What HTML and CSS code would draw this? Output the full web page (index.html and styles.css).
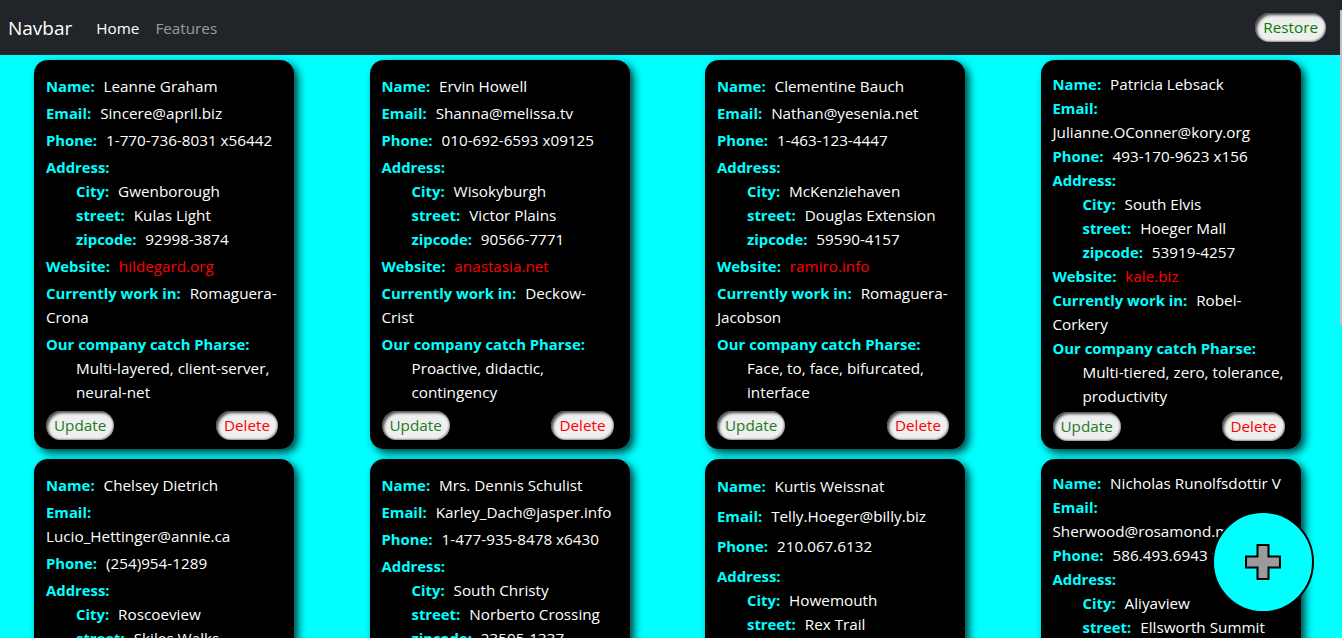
FILE: index.html
```html
<!DOCTYPE html>
<html lang="en">
<head>
<meta charset="utf-8">
<title>Users</title>
<link rel="stylesheet" href="styles.css">
</head>
<body>
<nav class="navbar">
  <a class="brand" href="#">Navbar</a>
  <ul class="nav-links">
    <li><a class="nav-link active" href="#">Home</a></li>
    <li><a class="nav-link" href="#">Features</a></li>
  </ul>
  <button class="btn btn-restore">Restore</button>
</nav>

<main class="grid">
  <article class="card">
    <div class="item"><span class="lbl">Name:</span> <span class="val">Leanne Graham</span></div>
    <div class="item"><span class="lbl">Email:</span> <span class="val">Sincere@april.biz</span></div>
    <div class="item"><span class="lbl">Phone:</span> <span class="val">1-770-736-8031 x56442</span></div>
    <div class="item"><div class="lbl">Address:</div>
      <div class="sub">
        <div><span class="lbl">City:</span> <span class="val">Gwenborough</span></div>
        <div><span class="lbl">street:</span> <span class="val">Kulas Light</span></div>
        <div><span class="lbl">zipcode:</span> <span class="val">92998-3874</span></div>
      </div>
    </div>
    <div class="item"><span class="lbl">Website:</span> <a class="link" href="#">hildegard.org</a></div>
    <div class="item"><span class="lbl">Currently work in:</span> <span class="val">Romaguera-Crona</span></div>
    <div class="item"><div class="lbl">Our company catch Pharse:</div><div class="sub val">Multi-layered, client-server, neural-net</div></div>
    <div class="actions"><button class="btn btn-update">Update</button><button class="btn btn-delete">Delete</button></div>
  </article>

  <article class="card">
    <div class="item"><span class="lbl">Name:</span> <span class="val">Ervin Howell</span></div>
    <div class="item"><span class="lbl">Email:</span> <span class="val">Shanna@melissa.tv</span></div>
    <div class="item"><span class="lbl">Phone:</span> <span class="val">010-692-6593 x09125</span></div>
    <div class="item"><div class="lbl">Address:</div>
      <div class="sub">
        <div><span class="lbl">City:</span> <span class="val">Wisokyburgh</span></div>
        <div><span class="lbl">street:</span> <span class="val">Victor Plains</span></div>
        <div><span class="lbl">zipcode:</span> <span class="val">90566-7771</span></div>
      </div>
    </div>
    <div class="item"><span class="lbl">Website:</span> <a class="link" href="#">anastasia.net</a></div>
    <div class="item"><span class="lbl">Currently work in:</span> <span class="val">Deckow-Crist</span></div>
    <div class="item"><div class="lbl">Our company catch Pharse:</div><div class="sub val">Proactive, didactic, contingency</div></div>
    <div class="actions"><button class="btn btn-update">Update</button><button class="btn btn-delete">Delete</button></div>
  </article>

  <article class="card">
    <div class="item"><span class="lbl">Name:</span> <span class="val">Clementine Bauch</span></div>
    <div class="item"><span class="lbl">Email:</span> <span class="val">Nathan@yesenia.net</span></div>
    <div class="item"><span class="lbl">Phone:</span> <span class="val">1-463-123-4447</span></div>
    <div class="item"><div class="lbl">Address:</div>
      <div class="sub">
        <div><span class="lbl">City:</span> <span class="val">McKenziehaven</span></div>
        <div><span class="lbl">street:</span> <span class="val">Douglas Extension</span></div>
        <div><span class="lbl">zipcode:</span> <span class="val">59590-4157</span></div>
      </div>
    </div>
    <div class="item"><span class="lbl">Website:</span> <a class="link" href="#">ramiro.info</a></div>
    <div class="item"><span class="lbl">Currently work in:</span> <span class="val">Romaguera-Jacobson</span></div>
    <div class="item"><div class="lbl">Our company catch Pharse:</div><div class="sub val">Face, to, face, bifurcated, interface</div></div>
    <div class="actions"><button class="btn btn-update">Update</button><button class="btn btn-delete">Delete</button></div>
  </article>

  <article class="card">
    <div class="item"><span class="lbl">Name:</span> <span class="val">Patricia Lebsack</span></div>
    <div class="item"><span class="lbl">Email:</span> <span class="val">Julianne.OConner@kory.org</span></div>
    <div class="item"><span class="lbl">Phone:</span> <span class="val">493-170-9623 x156</span></div>
    <div class="item"><div class="lbl">Address:</div>
      <div class="sub">
        <div><span class="lbl">City:</span> <span class="val">South Elvis</span></div>
        <div><span class="lbl">street:</span> <span class="val">Hoeger Mall</span></div>
        <div><span class="lbl">zipcode:</span> <span class="val">53919-4257</span></div>
      </div>
    </div>
    <div class="item"><span class="lbl">Website:</span> <a class="link" href="#">kale.biz</a></div>
    <div class="item"><span class="lbl">Currently work in:</span> <span class="val">Robel-Corkery</span></div>
    <div class="item"><div class="lbl">Our company catch Pharse:</div><div class="sub val">Multi-tiered, zero, tolerance, productivity</div></div>
    <div class="actions"><button class="btn btn-update">Update</button><button class="btn btn-delete">Delete</button></div>
  </article>

  <article class="card">
    <div class="item"><span class="lbl">Name:</span> <span class="val">Chelsey Dietrich</span></div>
    <div class="item"><span class="lbl">Email:</span> <span class="val">Lucio_Hettinger@annie.ca</span></div>
    <div class="item"><span class="lbl">Phone:</span> <span class="val">(254)954-1289</span></div>
    <div class="item"><div class="lbl">Address:</div>
      <div class="sub">
        <div><span class="lbl">City:</span> <span class="val">Roscoeview</span></div>
        <div><span class="lbl">street:</span> <span class="val">Skiles Walks</span></div>
        <div><span class="lbl">zipcode:</span> <span class="val">33263</span></div>
      </div>
    </div>
    <div class="item"><span class="lbl">Website:</span> <a class="link" href="#">demarco.info</a></div>
    <div class="item"><span class="lbl">Currently work in:</span> <span class="val">Keebler LLC</span></div>
    <div class="item"><div class="lbl">Our company catch Pharse:</div><div class="sub val">User-centric, fault-tolerant, solution</div></div>
    <div class="actions"><button class="btn btn-update">Update</button><button class="btn btn-delete">Delete</button></div>
  </article>

  <article class="card">
    <div class="item"><span class="lbl">Name:</span> <span class="val">Mrs. Dennis Schulist</span></div>
    <div class="item"><span class="lbl">Email:</span> <span class="val">Karley_Dach@jasper.info</span></div>
    <div class="item"><span class="lbl">Phone:</span> <span class="val">1-477-935-8478 x6430</span></div>
    <div class="item"><div class="lbl">Address:</div>
      <div class="sub">
        <div><span class="lbl">City:</span> <span class="val">South Christy</span></div>
        <div><span class="lbl">street:</span> <span class="val">Norberto Crossing</span></div>
        <div><span class="lbl">zipcode:</span> <span class="val">23505-1337</span></div>
      </div>
    </div>
    <div class="item"><span class="lbl">Website:</span> <a class="link" href="#">ola.org</a></div>
    <div class="item"><span class="lbl">Currently work in:</span> <span class="val">Considine-Lockman</span></div>
    <div class="item"><div class="lbl">Our company catch Pharse:</div><div class="sub val">Synchronised, bottom-line, interface</div></div>
    <div class="actions"><button class="btn btn-update">Update</button><button class="btn btn-delete">Delete</button></div>
  </article>

  <article class="card">
    <div class="item"><span class="lbl">Name:</span> <span class="val">Kurtis Weissnat</span></div>
    <div class="item"><span class="lbl">Email:</span> <span class="val">Telly.Hoeger@billy.biz</span></div>
    <div class="item"><span class="lbl">Phone:</span> <span class="val">210.067.6132</span></div>
    <div class="item"><div class="lbl">Address:</div>
      <div class="sub">
        <div><span class="lbl">City:</span> <span class="val">Howemouth</span></div>
        <div><span class="lbl">street:</span> <span class="val">Rex Trail</span></div>
        <div><span class="lbl">zipcode:</span> <span class="val">58804-1099</span></div>
      </div>
    </div>
    <div class="item"><span class="lbl">Website:</span> <a class="link" href="#">elvis.io</a></div>
    <div class="item"><span class="lbl">Currently work in:</span> <span class="val">Johns Group</span></div>
    <div class="item"><div class="lbl">Our company catch Pharse:</div><div class="sub val">Configurable, multimedia, task-force</div></div>
    <div class="actions"><button class="btn btn-update">Update</button><button class="btn btn-delete">Delete</button></div>
  </article>

  <article class="card">
    <div class="item"><span class="lbl">Name:</span> <span class="val">Nicholas Runolfsdottir V</span></div>
    <div class="item"><span class="lbl">Email:</span> <span class="val">Sherwood@rosamond.me</span></div>
    <div class="item"><span class="lbl">Phone:</span> <span class="val">586.493.6943 x140</span></div>
    <div class="item"><div class="lbl">Address:</div>
      <div class="sub">
        <div><span class="lbl">City:</span> <span class="val">Aliyaview</span></div>
        <div><span class="lbl">street:</span> <span class="val">Ellsworth Summit</span></div>
        <div><span class="lbl">zipcode:</span> <span class="val">45169</span></div>
      </div>
    </div>
    <div class="item"><span class="lbl">Website:</span> <a class="link" href="#">jacynthe.com</a></div>
    <div class="item"><span class="lbl">Currently work in:</span> <span class="val">Abernathy Group</span></div>
    <div class="item"><div class="lbl">Our company catch Pharse:</div><div class="sub val">Implemented, secondary, concept</div></div>
    <div class="actions"><button class="btn btn-update">Update</button><button class="btn btn-delete">Delete</button></div>
  </article>
</main>

<button class="fab" aria-label="Add user">
  <svg width="36" height="36" viewBox="0 0 36 36" aria-hidden="true">
    <path d="M12.5 1 H23.5 V12.5 H35 V23.5 H23.5 V35 H12.5 V23.5 H1 V12.5 H12.5 Z" fill="#9b9b9b" stroke="#000" stroke-width="2" stroke-linejoin="miter"/>
  </svg>
</button>
<div class="scroll-thumb" aria-hidden="true"></div>
</body>
</html>
```

FILE: styles.css
```css
html, body {
  margin: 0;
  padding: 0;
}
body {
  background: #00ffff;
  font-family: "Open Sans", "Noto Sans", sans-serif;
  font-size: 15.25px;
  line-height: 24px;
  color: #fff;
}
::-webkit-scrollbar { width: 0; height: 0; }

.navbar {
  height: 55px;
  background: #212529;
  display: flex;
  align-items: center;
  padding: 0 16px 0 8px;
  box-sizing: border-box;
}
.brand {
  color: #fff;
  text-decoration: none;
  font-size: 19px;
  margin-right: 16px;
}
.nav-links {
  list-style: none;
  display: flex;
  margin: 0;
  padding: 0;
  flex: 1;
}
.nav-link {
  display: block;
  padding: 8px;
  color: rgba(255,255,255,.55);
  text-decoration: none;
}
.nav-link.active { color: #fff; }

.btn {
  font-family: inherit;
  font-size: 15.25px;
  line-height: 21px;
  height: 29px;
  padding: 2px 8px;
  border: none;
  border-radius: 15px;
  background: #efefef;
  box-shadow: inset 2px 2px 3px rgba(0,0,0,.7), inset -1px -1px 2px rgba(0,0,0,.4);
  cursor: pointer;
}
.btn-restore { color: #008000; }
.btn-update { color: #1e7b1e; }
.btn-delete { color: #ff0000; }

.grid {
  display: grid;
  grid-template-columns: repeat(4, 1fr);
}
.card {
  width: 260px;
  box-sizing: border-box;
  margin: 5px 0 5px 34px;
  padding: 12px 12px 8px;
  background: #000;
  border-radius: 14px;
  box-shadow: 4px 4px 8px rgba(0,0,0,.75);
  display: flex;
  flex-direction: column;
  justify-content: space-around;
}
.lbl {
  color: #00ffff;
  font-weight: 700;
  font-size: 14.85px;
  margin-right: 5px;
}
.val { color: #fff; }
.link { color: #ff0000; text-decoration: none; }
.sub { padding-left: 30px; }
.actions {
  display: flex;
  justify-content: space-between;
  margin-top: 4px;
  padding-right: 4px;
}

.fab {
  position: fixed;
  right: 28px;
  bottom: 25px;
  width: 102px;
  height: 102px;
  border-radius: 50%;
  background: #00ffff;
  border: 2px solid #000;
  display: flex;
  align-items: center;
  justify-content: center;
  padding: 0;
  cursor: pointer;
}

.scroll-thumb {
  position: fixed;
  top: 10px;
  right: 0;
  width: 2px;
  height: 315px;
  background: #c1c1c1;
}
```
